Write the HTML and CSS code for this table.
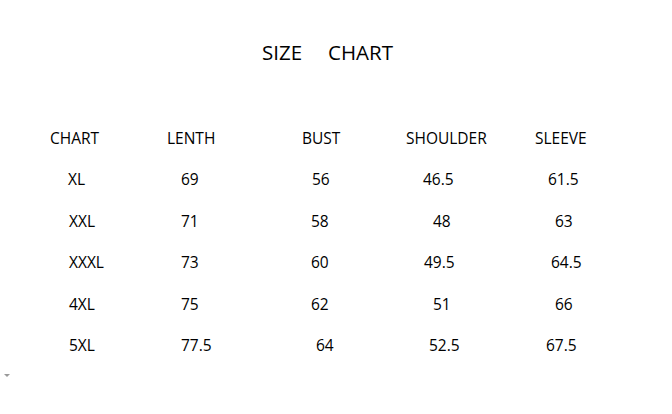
FILE: index.html
```html
<!DOCTYPE html>
<html>
<head>
<meta charset="utf-8">
<link rel="stylesheet" href="styles.css">
</head>
<body>
<div class="page">
  <h1 class="title"><span>SIZE</span><span>CHART</span></h1>
  <div class="chart">
    <div class="cell">CHART</div><div class="cell">LENTH</div><div class="cell">BUST</div><div class="cell">SHOULDER</div><div class="cell">SLEEVE</div>

    <div class="cell o18">XL</div><div class="cell o14">69</div><div class="cell o10">56</div><div class="cell o17">46.5</div><div class="cell o13">61.5</div>
    <div class="cell o19">XXL</div><div class="cell o14">71</div><div class="cell o9">58</div><div class="cell o27">48</div><div class="cell o20">63</div>
    <div class="cell o19">XXXL</div><div class="cell o14">73</div><div class="cell o9">60</div><div class="cell o18">49.5</div><div class="cell o16">64.5</div>
    <div class="cell o19">4XL</div><div class="cell o14">75</div><div class="cell o9">62</div><div class="cell o27">51</div><div class="cell o20">66</div>
    <div class="cell o19">5XL</div><div class="cell o14">77.5</div><div class="cell o14">64</div><div class="cell o23">52.5</div><div class="cell o11">67.5</div>
  </div>
  <div class="marker"></div>
</div>
</body>
</html>
```

FILE: styles.css
```css
html, body {
  margin: 0;
  padding: 0;
  background: #ffffff;
}
.page {
  width: 672px;
  height: 414px;
  font-family: "Open Sans", "Liberation Sans", sans-serif;
  color: #000000;
  position: relative;
  overflow: hidden;
}
.title {
  margin: 0;
  padding-top: 37px;
  padding-left: 262px;
  display: flex;
  gap: 26px;
  font-size: 20.5px;
  font-weight: 400;
  line-height: 30px;
}
.chart {
  margin-top: 50.5px;
  padding-left: 50px;
  display: grid;
  grid-template-columns: 117px 135px 104px 129px 120px;
  grid-auto-rows: 41.6px;
  font-size: 15.5px;
  line-height: 41.6px;
}
.cell { white-space: nowrap; }
.o9 { padding-left: 9px; }
.o10 { padding-left: 10px; }
.o11 { padding-left: 11px; }
.o13 { padding-left: 13px; }
.o14 { padding-left: 14px; }
.o16 { padding-left: 16px; }
.o17 { padding-left: 17px; }
.o18 { padding-left: 18px; }
.o19 { padding-left: 19px; }
.o20 { padding-left: 20px; }
.o23 { padding-left: 23px; }
.o27 { padding-left: 27px; }
.marker {
  position: absolute;
  left: 4px;
  top: 374px;
  width: 0;
  height: 0;
  border-left: 3px solid transparent;
  border-right: 3px solid transparent;
  border-top: 3px solid #9a9a9a;
}
```
